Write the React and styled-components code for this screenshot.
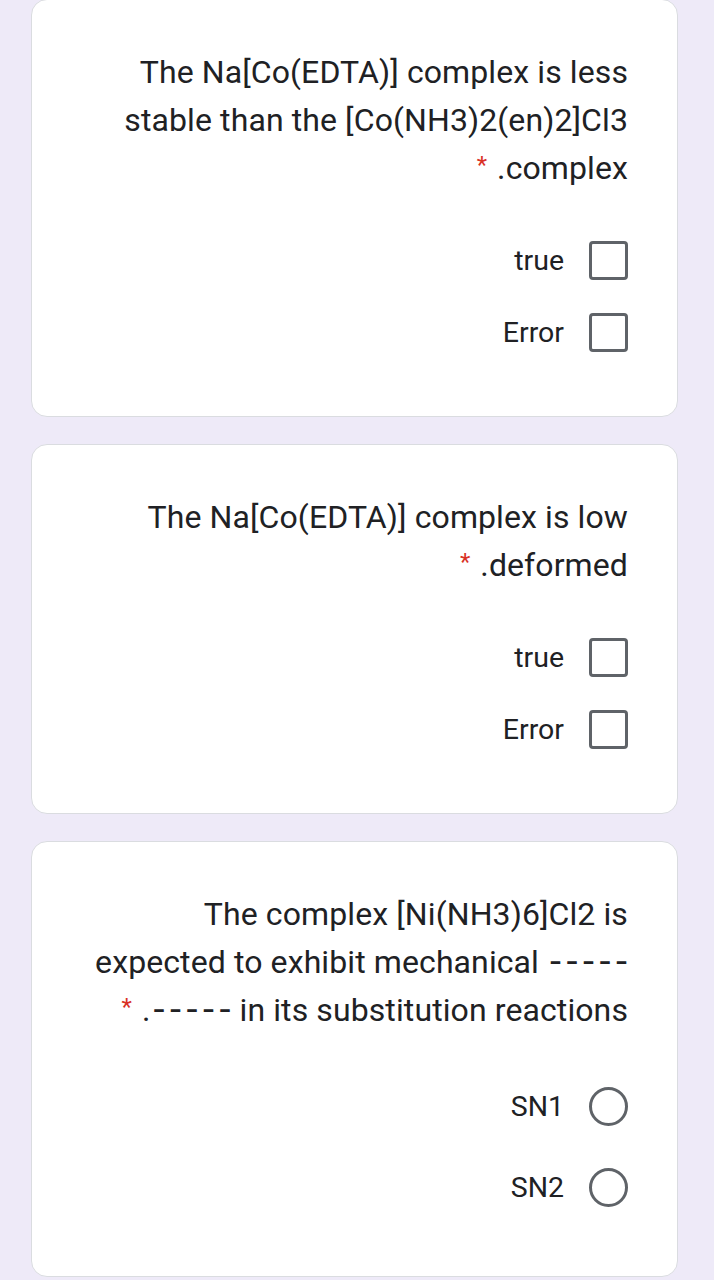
import React from "react";
import styled, { createGlobalStyle } from "styled-components";

const Global = createGlobalStyle`
  html, body { margin: 0; padding: 0; background: #eeeaf8; }
  body { font-family: Roboto, "Noto Sans", Arial, sans-serif; -webkit-font-smoothing: antialiased; }
`;

const Page = styled.div`
  width: 714px;
  min-height: 1280px;
  box-sizing: border-box;
  display: flex;
  flex-direction: column;
  gap: 27px;
  padding: 0 36px 0 31px;
  margin-top: -1px;
  background: #eeeaf8;
`;

const Card = styled.section`
  background: #ffffff;
  border: 1px solid #dadce0;
  border-radius: 16px;
  padding: 48px 49px 48px 24px;
  display: flex;
  flex-direction: column;
  align-items: flex-end;
`;

const Question = styled.div`
  font-size: 32px;
  line-height: 48px;
  color: #202124;
  text-align: right;
  letter-spacing: 0.1px;
`;

const Line = styled.div`
  white-space: nowrap;
  height: 48px;
`;

const Star = styled.span`
  color: #d93025;
  font-size: 24px;
  position: relative;
  top: -6px;
  margin-right: 10px;
`;

const Dashes = styled.span`
  font-family: "DejaVu Sans", sans-serif;
  font-size: 36px;
  line-height: 1;
  letter-spacing: 3.5px;
  margin-right: -3.5px;
  margin-left: 2px;
  position: relative;
  top: -1px;
`;

const Options = styled.div`
  margin-top: 32px;
  display: flex;
  flex-direction: column;
  align-items: flex-end;
`;

const OptionRow = styled.label`
  display: flex;
  align-items: center;
  gap: 25px;
  height: ${(p) => (p.$radio ? 81 : 72)}px;
  font-size: 28.5px;
  color: #202124;
`;

const Box = styled.span`
  width: 39px;
  height: 39px;
  box-sizing: border-box;
  border: 3px solid #5f6368;
  border-radius: 4px;
  flex: none;
`;

const Radio = styled.span`
  width: 39px;
  height: 39px;
  box-sizing: border-box;
  border: 3.5px solid #5f6368;
  border-radius: 50%;
  flex: none;
`;

const renderLine = (text) =>
  text.split(/(-----)/).map((part, k) =>
    part === "-----" ? <Dashes key={k}>{part}</Dashes> : part
  );

const data = [
  {
    lines: ["The Na[Co(EDTA)] complex is less", "stable than the [Co(NH3)2(en)2]Cl3", ".complex"],
    type: "check",
    options: ["true", "Error"],
  },
  {
    lines: ["The Na[Co(EDTA)] complex is low", ".deformed"],
    type: "check",
    options: ["true", "Error"],
  },
  {
    lines: [
      "The complex [Ni(NH3)6]Cl2 is",
      "expected to exhibit mechanical -----",
      ".----- in its substitution reactions",
    ],
    type: "radio",
    options: ["SN1", "SN2"],
  },
];

export default function App() {
  return (
    <>
      <Global />
      <Page>
        {data.map((q, i) => (
          <Card key={i}>
            <Question>
              {q.lines.map((l, j) => (
                <Line key={j}>
                  {j === q.lines.length - 1 && <Star>*</Star>}
                  {renderLine(l)}
                </Line>
              ))}
            </Question>
            <Options>
              {q.options.map((o) => (
                <OptionRow key={o} $radio={q.type === "radio"}>
                  {o}
                  {q.type === "radio" ? <Radio /> : <Box />}
                </OptionRow>
              ))}
            </Options>
          </Card>
        ))}
      </Page>
    </>
  );
}
